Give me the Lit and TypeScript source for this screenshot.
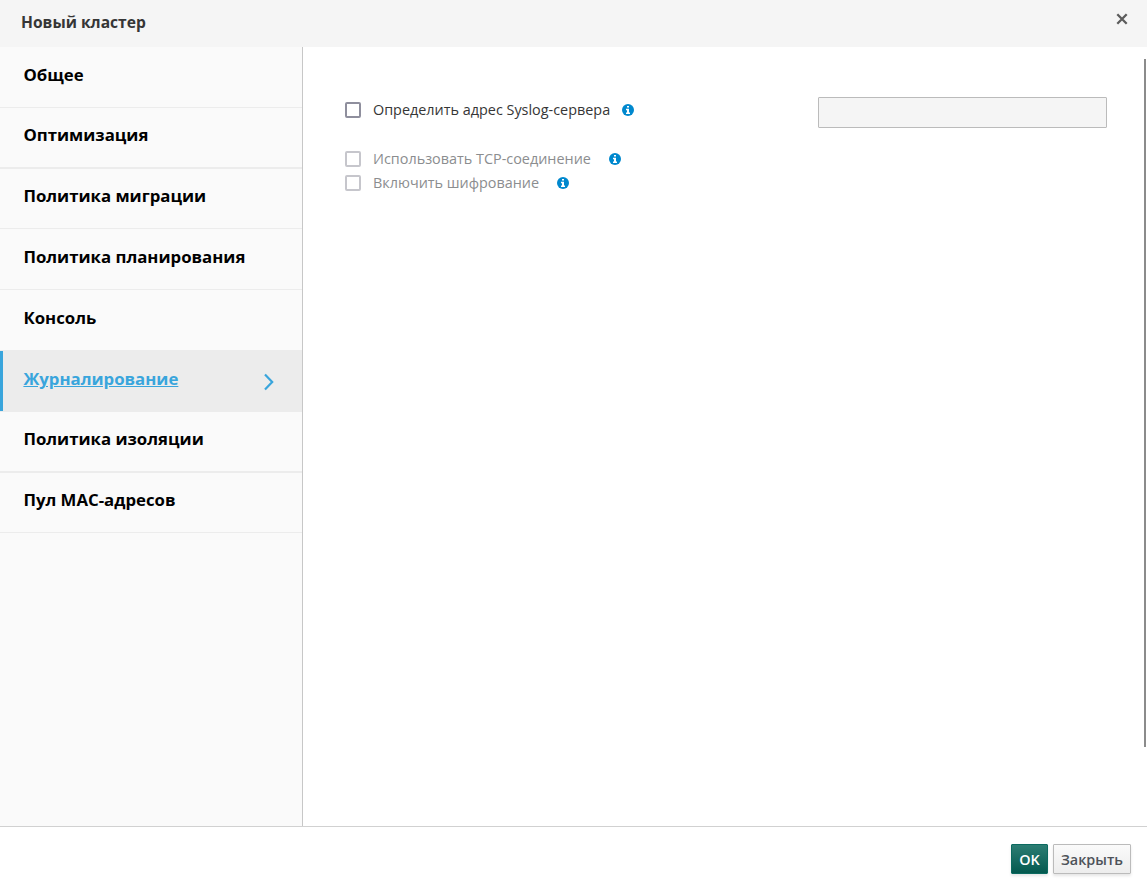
import { LitElement, html, css } from "lit";
import { customElement, state } from "lit/decorators.js";
import { classMap } from "lit/directives/class-map.js";

interface Tab {
  label: string;
  tall: boolean;
  line: number;
}

const TABS: Tab[] = [
  { label: "Общее", tall: true, line: 1 },
  { label: "Оптимизация", tall: false, line: 2 },
  { label: "Политика миграции", tall: false, line: 1 },
  { label: "Политика планирования", tall: true, line: 1 },
  { label: "Консоль", tall: true, line: 1 },
  { label: "Журналирование", tall: true, line: 1 },
  { label: "Политика изоляции", tall: false, line: 2 },
  { label: "Пул MAC-адресов", tall: false, line: 1 },
];

@customElement("info-icon")
export class InfoIcon extends LitElement {
  static styles = css`
    :host { display: block; width: 12px; height: 12px; }
    svg { display: block; }
  `;
  render() {
    return html`<svg width="12" height="12" viewBox="0 0 12 12">
      <circle cx="6" cy="6" r="6" fill="#0088ce"></circle>
      <path d="M5 2h2v1.6H5zM4 4.8h3v3.7h1V10H4V8.5h1V6.2H4z" fill="#fff"></path>
    </svg>`;
  }
}

@customElement("app-root")
export class AppRoot extends LitElement {
  @state() private active = 5;

  static styles = css`
    * { box-sizing: border-box; }
    :host {
      display: flex;
      flex-direction: column;
      height: 893px;
      background: #fff;
      color: #363636;
      font-family: "Open Sans", "Noto Sans", sans-serif;
    }
    .header {
      display: flex;
      justify-content: space-between;
      height: 47px;
      flex: none;
      background: #f5f5f5;
      padding: 11px 19px 0 21px;
    }
    .title { margin: 0; font-size: 15.6px; line-height: 22px; font-weight: 700; }
    .close { margin-top: 2px; width: 12px; height: 12px; }
    .close svg { display: block; }
    .body { display: flex; flex: 1; min-height: 0; }
    .sidebar { width: 303px; background: #fafafa; border-right: 1px solid #c7c7c7; }
    .tab {
      display: flex;
      justify-content: space-between;
      height: 61px;
      padding: 16px 27px 0 23.4px;
      border-bottom: 1px solid #ececec;
      font-size: 16.8px;
      line-height: 24px;
      font-weight: 700;
      color: #000;
    }
    .tab.short { height: 60px; padding-top: 15px; }
    .tab.thick { height: 61px; border-bottom-width: 2px; }
    .tab.active {
      background: linear-gradient(to right, #39a5dc 3px, #ececec 3px);
      color: #39a5dc;
      text-decoration: underline;
    }
    .chevron { margin-top: 6px; }
    .content {
      flex: 1;
      display: flex;
      justify-content: space-between;
      padding: 12px 1px 80px 42px;
    }
    .form { width: 762px; padding-top: 38px; font-size: 14.4px; }
    .row { display: flex; align-items: center; height: 24px; }
    .first { height: 31px; margin-bottom: 19px; }
    .first .check, .first .text, .first info-icon { position: relative; top: -3px; }
    .check { width: 16px; height: 16px; border: 2px solid #8f8f9d; border-radius: 2px; margin-right: 12px; }
    .disabled .check { border-color: #c6c6cc; }
    .disabled .text { color: #8b8d8f; }
    .text { line-height: 20px; margin-right: 18px; }
    .first .text { margin-right: 12px; }
    .input { width: 289px; height: 31px; margin-left: auto; background: #f5f5f5; border: 1px solid #bbb; border-radius: 1px; }
    .scroll { width: 2px; height: 688px; background: #8b8b8b; }
    .footer {
      flex: none;
      display: flex;
      justify-content: flex-end;
      gap: 5px;
      height: 67px;
      padding: 17px 16px 0 0;
      border-top: 1px solid #d1d1d1;
    }
    .btn {
      width: 78px;
      height: 30px;
      padding: 0;
      border: 1px solid #bbb;
      border-radius: 1px;
      background: linear-gradient(#fafafa, #ededed);
      box-shadow: 0 2px 3px rgba(3, 3, 3, 0.1);
      color: #4d5258;
      font: 600 14.4px/29px "Open Sans", "Noto Sans", sans-serif;
    }
    .primary { width: 37px; border-color: #0c6a60; background: linear-gradient(#2c7d73, #04594f); color: #fff; }
  `;

  render() {
    return html`
      <div class="header">
        <h1 class="title">Новый кластер</h1>
        <div class="close">
          <svg width="12" height="12" viewBox="0 0 12 12">
            <path d="M1.3 1.3 10.7 10.7M10.7 1.3 1.3 10.7" stroke="#5c5c5c" stroke-width="2.3" fill="none"></path>
          </svg>
        </div>
      </div>
      <div class="body">
        <div class="sidebar">
          ${TABS.map((tab, i) => html`
            <div
              class=${classMap({ tab: true, short: !tab.tall, thick: tab.line === 2, active: i === this.active })}
              @click=${() => (this.active = i)}
            >
              <span>${tab.label}</span>
              ${i === this.active
                ? html`<svg class="chevron" width="12" height="18" viewBox="0 0 12 18">
                    <path d="M2 1.5 9.2 9 2 16.5" stroke="#39a5dc" stroke-width="2.2" fill="none"></path>
                  </svg>`
                : ""}
            </div>`)}
        </div>
        <div class="content">
          <div class="form">
            <div class="row first">
              <div class="check"></div>
              <div class="text">Определить адрес Syslog-сервера</div>
              <info-icon></info-icon>
              <div class="input"></div>
            </div>
            <div class="row disabled">
              <div class="check"></div>
              <div class="text">Использовать TCP-соединение</div>
              <info-icon></info-icon>
            </div>
            <div class="row disabled">
              <div class="check"></div>
              <div class="text">Включить шифрование</div>
              <info-icon></info-icon>
            </div>
          </div>
          <div class="scroll"></div>
        </div>
      </div>
      <div class="footer">
        <button class="btn primary">OK</button>
        <button class="btn">Закрыть</button>
      </div>
    `;
  }
}
